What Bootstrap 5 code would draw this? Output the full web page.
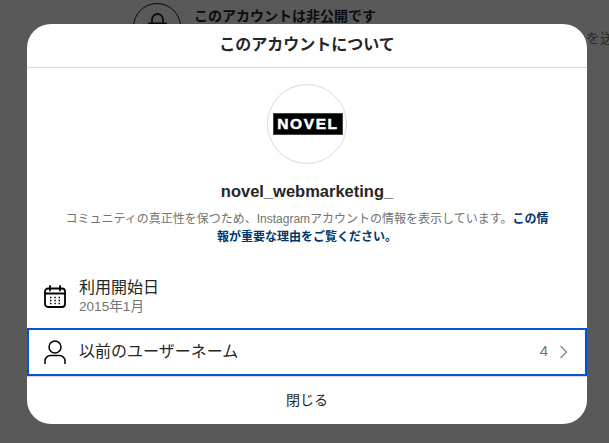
<!DOCTYPE html>
<html lang="ja">
<head>
<meta charset="utf-8">
<title>このアカウントについて</title>
<link href="https://cdn.jsdelivr.net/npm/bootstrap@5.3.0/dist/css/bootstrap.min.css" rel="stylesheet">
<style>
html,body{height:100%;margin:0;overflow:hidden}
body{background:#595959;font-family:"Liberation Sans","Noto Sans CJK JP",sans-serif;color:#262626;position:relative;width:609px;height:443px}
.bg-layer{position:absolute;inset:0;color:#0c0c0c}
.bg-lock{position:absolute;left:133px;top:3px}
.bg-title{position:absolute;left:194px;top:7px;font-size:14px;font-weight:700;line-height:18px}
.bg-tail{position:absolute;left:586px;top:29px;font-size:14px;line-height:18px;color:#2a2a2a;white-space:nowrap}
.sheet{position:absolute;left:27px;top:24px;width:560px;height:400px;background:#fff;border-radius:24px;overflow:hidden}
.sheet-head{height:44px;border-bottom:1px solid #dbdbdb;font-size:16px;font-weight:700;color:#262626;line-height:42px}
.sheet-body{height:199px;padding-top:16px}
.avatar-ring{width:80px;height:80px;border:1px solid #dbdbdb;border-radius:50%}
.handle{font-size:16.5px;font-weight:700;line-height:18px;margin-top:18px;color:#262626}
.blurb{font-size:12px;line-height:18px;color:#737373;margin:10px 0 0 35px;width:490px}
.blurb b{color:#00376b}
.row-date{height:62px;padding:0 0 2px 16px}
.row-icon{width:24px;height:24px;flex:none}
.row-main{font-size:16px;line-height:20px;color:#262626;margin-left:12px}
.row-sub{font-size:13.6px;line-height:18px;color:#737373}
.row-prev{height:48px;border:2px solid #0056d6;padding:0 16px 0 15px;margin-top:-1px}
.row-prev .row-main{margin-left:11px}
.count{font-size:15px;color:#737373;padding-bottom:1px}
.chev{width:10px;height:16px;margin-left:11px}
.close-row{height:47px;border-top:1px solid #dbdbdb;font-size:14px;line-height:46px;color:#262626}
.logo-box{width:70px;height:22px;background:#000;border:1px solid #444;display:flex;align-items:center;justify-content:center;margin-left:1px}
.logo-text{color:#fff;font-weight:700;font-size:15.5px;letter-spacing:1.6px;line-height:1;-webkit-text-stroke:.5px #fff;margin-right:-1px}
</style>
</head>
<body>
<div class="bg-layer">
  <svg class="bg-lock" width="48" height="48" viewBox="0 0 48 48" fill="none" stroke="#0c0c0c" stroke-width="1"><circle cx="24" cy="24" r="23.500"/><path d="M19 20v-3.500a5.500 5.500 0 0 1 11 0V20M15 20.500h19" stroke-width="1.800"/></svg>
  <div class="bg-title">このアカウントは非公開です</div>
  <div class="bg-tail">を送</div>
</div>
<div class="sheet">
  <div class="sheet-head text-center">このアカウントについて</div>
  <div class="sheet-body text-center">
    <div class="avatar-ring mx-auto d-flex align-items-center justify-content-center">
      <div class="logo-box"><span class="logo-text">NOVEL</span></div>
    </div>
    <div class="handle">novel_webmarketing_</div>
    <div class="blurb">コミュニティの真正性を保つため、Instagramアカウントの情報を表示しています。<b>この情報が重要な理由をご覧ください。</b></div>
  </div>
  <div class="row-date d-flex align-items-center">
    <svg class="row-icon" viewBox="0 0 24 24" fill="none" stroke="#000" stroke-width="1.800"><rect x="2" y="3.500" width="20" height="18.500" rx="3"/><path d="M2 8.500h20M7 1v4.500M17 1v4.500" stroke-linecap="round"/><path d="M7 12.500h1.500M11.300 12.500h1.500M15.500 12.500h1.500M7 15.500h1.500M11.300 15.500h1.500M15.500 15.500h1.500M7 18.500h1.500M11.300 18.500h1.500M15.500 18.500h1.500" stroke-width="1.300"/></svg>
    <div>
      <div class="row-main">利用開始日</div>
      <div class="row-main row-sub">2015年1月</div>
    </div>
  </div>
  <div class="row-prev d-flex align-items-center">
    <svg class="row-icon" viewBox="0 0 24 24" fill="none" stroke="#000" stroke-width="1.500"><circle cx="11" cy="7" r="6"/><path d="M1 23.500v-2.500a5.500 5.500 0 0 1 5.500-5.500h9a5.500 5.500 0 0 1 5.500 5.500v2.500" stroke-linecap="round"/></svg>
    <div class="row-main flex-grow-1">以前のユーザーネーム</div>
    <span class="count">4</span>
    <svg class="chev" viewBox="0 0 10 16" fill="none" stroke="#8e8e8e" stroke-width="1.500"><path d="M1.500 2l6 6-6 6"/></svg>
  </div>
  <div class="close-row text-center">閉じる</div>
</div>
</body>
</html>
